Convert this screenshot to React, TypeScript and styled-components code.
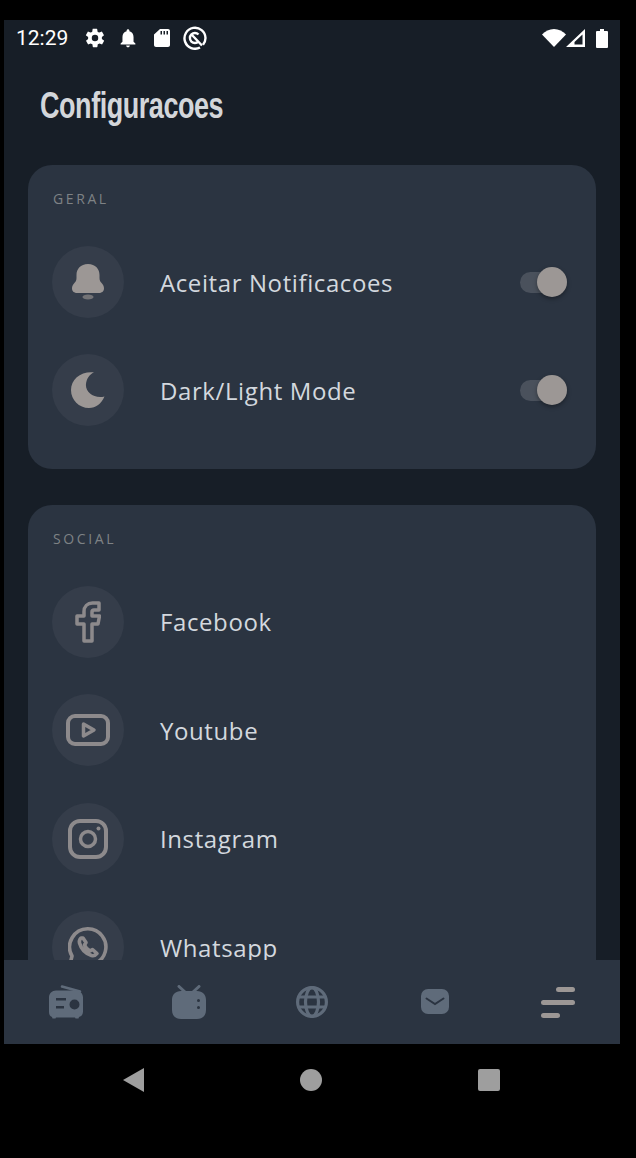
import React from "react"
import styled, { createGlobalStyle } from "styled-components"

const GlobalStyle = createGlobalStyle`
    html, body {
        margin: 0;
        padding: 0;
        background: #000;
    }
`

const ICON = "#9c9795"
const OUTLINE = "#8d8a8c"
const NAV_ICON = "#5f6b7a"

const BellIcon = () => (
    <svg width="32" height="36" viewBox="0 0 32 36">
        <path fill={ICON} d="M16 0C8.500 0 4.500 5 4.500 11v3c0 2.500-1 4-2.500 5.500C.5 21 0 23 0 24.500 0 27.500 2.500 29 5 29h22c2.500 0 5-1.500 5-4.500 0-1.500-.5-3.500-2-5-1.500-1.500-2.500-3-2.500-5.500v-3C27.500 5 23.500 0 16 0z" />
        <ellipse cx="16" cy="33" rx="5.500" ry="2.500" fill={ICON} opacity="0.6" />
    </svg>
)

const MoonIcon = () => (
    <svg width="34" height="36" viewBox="0 0 34 36">
        <path fill={ICON} d="M23 .3C10-1 0 7 0 18c0 10 8 18 18 18 7 0 12-4 15.500-11.500C23 27 14 20 15 12c.5-5 3-9 8-11.700z" />
    </svg>
)

const FacebookIcon = () => (
    <svg width="26" height="42" viewBox="0 0 26 42" fill="none" stroke={OUTLINE} strokeWidth="3.500" strokeLinejoin="round">
        <path d="M24 2h-6.500C12.500 2 9 5.500 9 10.500V15H2v8h7v17h8V23h6l1.500-8H17v-4c0-1.200.8-2 2-2h5V2z" />
    </svg>
)

const YoutubeIcon = () => (
    <svg width="44" height="32" viewBox="0 0 44 32" fill="none" stroke={OUTLINE} strokeWidth="4" strokeLinejoin="round">
        <rect x="2" y="2" width="40" height="28" rx="7" />
        <path d="M17.500 10 28 16l-10.500 6z" strokeWidth="3.500" />
    </svg>
)

const InstagramIcon = () => (
    <svg width="40" height="40" viewBox="0 0 40 40" fill="none" stroke={OUTLINE} strokeWidth="4">
        <rect x="2" y="2" width="36" height="36" rx="10" />
        <circle cx="20" cy="20" r="7.500" strokeWidth="3.500" />
        <circle cx="30.500" cy="9.500" r="2" fill={OUTLINE} stroke="none" />
    </svg>
)

const WhatsappIcon = () => (
    <svg width="40" height="40" viewBox="0 0 40 40" fill="none" stroke={OUTLINE} strokeWidth="3.600" strokeLinejoin="round">
        <path d="M20 1.800A18.200 18.200 0 0 0 4 29L1.800 38.200 11 36A18.200 18.200 0 1 0 20 1.800z" />
        <path d="M13 11c-1.500 1.500-2 3-1.500 5 1.500 5.500 6 10.500 12 12.500 2 .5 4 0 5.500-2l-4.500-4-2.500 1.500c-2.500-1-4.500-3.500-5.500-6l1.500-2.500-3-4.500z" />
    </svg>
)

const RadioIcon = () => (
    <svg width="34" height="34" viewBox="0 0 34 34">
        <path d="M13 1.500 31 6.500" stroke={NAV_ICON} strokeWidth="2.500" strokeLinecap="round" />
        <path fill={NAV_ICON} fillRule="evenodd" d="M7 5.500h20c4 0 7 3 7 7v14c0 3-1.500 5-4 5.500l-.5 1.500h-3l-.5-1H7l-.5 1h-3L3 32c-2-.5-3-2.500-3-5V12.500c0-4 3-7 7-7zM7 13v2.500h10V13H7zm0 8v2.500h8V21H7zm18.500-6.500a5 5 0 1 0 0 10 5 5 0 0 0 0-10z" />
    </svg>
)

const TvIcon = () => (
    <svg width="34" height="34" viewBox="0 0 34 34">
        <path d="M7 1.500 13 7M27 1.500 21 7" stroke={NAV_ICON} strokeWidth="3" strokeLinecap="round" />
        <path fill={NAV_ICON} fillRule="evenodd" d="M9 6h16c5.500 0 9 3.500 9 9v10c0 5.500-3.500 9-9 9H9c-5.500 0-9-3.500-9-9V15c0-5.500 3.500-9 9-9zm17.500 8a1.500 1.500 0 1 0 0 3 1.500 1.500 0 0 0 0-3zm0 7a1.500 1.500 0 1 0 0 3 1.500 1.500 0 0 0 0-3z" />
    </svg>
)

const GlobeIcon = () => (
    <svg width="32" height="32" viewBox="0 0 32 32" fill="none" stroke={NAV_ICON} strokeWidth="3.200">
        <circle cx="16" cy="16" r="14.400" />
        <ellipse cx="16" cy="16" rx="6.500" ry="14.400" />
        <path d="M2 11h28M2 21h28" />
    </svg>
)

const MailIcon = () => (
    <svg width="28" height="26" viewBox="0 0 28 26">
        <rect width="28" height="25" rx="7" fill={NAV_ICON} />
        <path d="M5.500 9.500 14 15 22.500 9.500" fill="none" stroke="#2b3441" strokeWidth="2" strokeLinecap="round" />
    </svg>
)

const MenuIcon = () => (
    <svg width="34" height="31" viewBox="0 0 34 31" fill={ICON}>
        <rect x="15" y="0" width="19" height="5" rx="2.500" />
        <rect x="0" y="13" width="34" height="5" rx="2.500" />
        <rect x="0" y="26" width="19" height="5" rx="2.500" />
    </svg>
)

const geral = [
    { label: "Aceitar Notificacoes", icon: <BellIcon /> },
    { label: "Dark/Light Mode", icon: <MoonIcon /> },
]

const social = [
    { label: "Facebook", icon: <FacebookIcon /> },
    { label: "Youtube", icon: <YoutubeIcon /> },
    { label: "Instagram", icon: <InstagramIcon /> },
    { label: "Whatsapp", icon: <WhatsappIcon /> },
]

const App = () => {
    return (
        <Device>
            <GlobalStyle />
            <Screen>
                <StatusBar>
                    <StatusLeft>
                        <Clock>12:29</Clock>
                        <svg width="24" height="24" viewBox="-1 -1 26 26" fill="#fff">
                            <path d="M19.400 13c0-.3.100-.6.100-1s0-.7-.1-1l2.100-1.600c.2-.2.200-.4.100-.6l-2-3.500c-.1-.2-.4-.3-.6-.2l-2.500 1c-.5-.4-1.100-.7-1.700-1l-.4-2.600c0-.3-.2-.5-.5-.5h-4c-.3 0-.5.200-.5.400l-.4 2.700c-.6.200-1.100.6-1.700 1l-2.500-1c-.2-.1-.5 0-.6.200l-2 3.500c-.1.200-.1.400.1.600L4.600 11c0 .3-.1.600-.1 1s0 .7.1 1l-2.100 1.600c-.2.200-.2.400-.1.600l2 3.500c.1.200.4.300.6.200l2.500-1c.5.400 1.100.7 1.700 1l.4 2.600c0 .3.200.5.500.5h4c.3 0 .5-.2.500-.4l.4-2.700c.6-.2 1.100-.6 1.700-1l2.500 1c.2.100.5 0 .6-.2l2-3.500c.1-.2.100-.4-.1-.6L19.400 13zM12 15.500a3.500 3.500 0 1 1 0-7 3.500 3.500 0 0 1 0 7z" />
                        </svg>
                        <svg width="24" height="24" viewBox="-1 -1 26 26" fill="#fff">
                            <path d="M12 22c1.100 0 2-.9 2-2h-4c0 1.100.9 2 2 2zm6-6v-5c0-3.100-1.600-5.600-4.500-6.300V4c0-.8-.7-1.500-1.500-1.500s-1.500.7-1.500 1.500v.7C7.600 5.400 6 7.900 6 11v5l-2 2v1h16v-1l-2-2z" />
                        </svg>
                        <svg width="24" height="24" viewBox="0 0 24 24" fill="#fff">
                            <path d="M18 3h-8L4 8.500V19c0 1.100.9 2 2 2h12c1.100 0 2-.9 2-2V5c0-1.100-.9-2-2-2zm-6 5.500h-1.500V5H12v3.500zm3 0h-1.500V5H15v3.500zm3 0h-1.500V5H18v3.500z" />
                        </svg>
                        <svg width="24" height="24" viewBox="0 0 24 24" fill="none" stroke="#fff" strokeWidth="2.400">
                            <path d="M17 21.500A10.500 10.500 0 1 1 22.500 12c0 2.500-1 5-2.500 6.800" />
                            <path d="M15.500 8.500a5 5 0 1 0 0 7M8.500 8.500 19 19.500" />
                        </svg>
                    </StatusLeft>
                    <StatusRight>
                        <svg width="24" height="18" viewBox="0 0 24 18" fill="#fff">
                            <path d="M12 18 0 5.500C3.300 2.200 7.400 0 12 0s8.700 2.200 12 5.500L12 18z" />
                        </svg>
                        <svg width="20" height="18" viewBox="0 0 20 18">
                            <path fill="#fff" fillRule="evenodd" d="M19 0v18H0L19 0zm-2.500 5.500L8.500 13v2.500h8v-10z" />
                        </svg>
                        <svg width="12" height="19" viewBox="0 0 12 19" fill="#fff">
                            <path d="M4 0h4v2h3a1 1 0 0 1 1 1v15a1 1 0 0 1-1 1H1a1 1 0 0 1-1-1V3a1 1 0 0 1 1-1h3V0z" />
                        </svg>
                    </StatusRight>
                </StatusBar>
                <Scroller>
                    <Title>Configuracoes</Title>
                    <Card>
                        <CardLabel>GERAL</CardLabel>
                        {geral.map(item => (
                            <Row key={item.label}>
                                <IconCircle>{item.icon}</IconCircle>
                                <RowLabel>{item.label}</RowLabel>
                                <Toggle>
                                    <ToggleThumb />
                                </Toggle>
                            </Row>
                        ))}
                    </Card>
                    <Card>
                        <CardLabel>SOCIAL</CardLabel>
                        {social.map(item => (
                            <Row key={item.label}>
                                <IconCircle>{item.icon}</IconCircle>
                                <RowLabel>{item.label}</RowLabel>
                            </Row>
                        ))}
                    </Card>
                </Scroller>
                <BottomNav>
                    <NavSlot><RadioIcon /></NavSlot>
                    <NavSlot><TvIcon /></NavSlot>
                    <NavSlot><GlobeIcon /></NavSlot>
                    <NavSlot><MailIcon /></NavSlot>
                    <NavSlot><MenuIcon /></NavSlot>
                </BottomNav>
            </Screen>
            <SystemBar>
                <BackButton />
                <HomeButton />
                <RecentButton />
            </SystemBar>
        </Device>
    )
}

export default App

const Device = styled.div`
    width: 636px;
    height: 1158px;
    padding-top: 20px;
    box-sizing: border-box;
    background: #000;
    overflow: hidden;
`

const Screen = styled.div`
    width: 616px;
    height: 1024px;
    margin-left: 4px;
    display: flex;
    flex-direction: column;
    background: #171e27;
`

const StatusBar = styled.div`
    height: 36px;
    flex-shrink: 0;
    padding: 0 12px;
    display: flex;
    justify-content: space-between;
    align-items: center;
`

const StatusLeft = styled.div`
    display: flex;
    align-items: center;
    gap: 9.5px;
`

const StatusRight = styled.div`
    display: flex;
    align-items: center;

    svg:last-child {
        margin-left: 10px;
    }
`

const Clock = styled.span`
    font-family: Roboto, sans-serif;
    font-size: 21px;
    color: #fff;
    margin-right: 5px;
`

const Scroller = styled.div`
    flex: 1;
    min-height: 0;
    overflow: hidden;
    padding: 0 24px;
`

const Title = styled.h1`
    margin: 26px 0 35px 12px;
    height: 48px;
    font-family: "Liberation Sans", sans-serif;
    font-size: 36px;
    line-height: 48px;
    font-weight: 700;
    letter-spacing: -0.6px;
    color: #d3d6da;
    transform: scaleX(0.75);
    transform-origin: left center;
    white-space: nowrap;
`

const Card = styled.section`
    background: #2b3441;
    border-radius: 24px;
    padding: 24px 24px 42.6px;
    margin-bottom: 36px;
`

const CardLabel = styled.div`
    font-family: "Open Sans", sans-serif;
    font-size: 14px;
    line-height: 20px;
    letter-spacing: 2.6px;
    color: #7e8285;
    margin: 0 0 37px 1px;
`

const Row = styled.div`
    display: flex;
    align-items: center;
    height: 72px;
    margin-top: 36.4px;

    &:first-of-type {
        margin-top: 0;
    }
`

const IconCircle = styled.div`
    width: 72px;
    height: 72px;
    flex-shrink: 0;
    border-radius: 50%;
    background: #353d4a;
    display: flex;
    align-items: center;
    justify-content: center;
`

const RowLabel = styled.span`
    flex: 1;
    margin-left: 36px;
    font-family: "Open Sans", sans-serif;
    font-size: 24px;
    letter-spacing: 0.6px;
    color: #d3d8de;
`

const Toggle = styled.div`
    position: relative;
    width: 47px;
    height: 21px;
    margin-right: 5px;
    border-radius: 11px;
    background: #4a515c;
`

const ToggleThumb = styled.div`
    position: absolute;
    right: 0;
    top: -5px;
    width: 30px;
    height: 30px;
    border-radius: 50%;
    background: ${ICON};
    box-shadow: 0 2px 4px rgba(0, 0, 0, 0.35);
`

const BottomNav = styled.nav`
    height: 84px;
    flex-shrink: 0;
    background: #2b3441;
    display: flex;
    align-items: center;
    justify-content: space-around;
`

const NavSlot = styled.div`
    flex: 1;
    display: flex;
    align-items: center;
    justify-content: center;
`

const SystemBar = styled.div`
    height: 114px;
    width: 616px;
    margin-left: 4px;
    padding: 0 1px 42px 0;
    box-sizing: border-box;
    display: flex;
    align-items: center;
    justify-content: center;
    gap: 156px;
`

const BackButton = styled.div`
    width: 0;
    height: 0;
    margin-left: -1px;
    border-top: 12px solid transparent;
    border-bottom: 12px solid transparent;
    border-right: 21px solid #9e9e9e;
`

const HomeButton = styled.div`
    width: 22px;
    height: 22px;
    border-radius: 50%;
    background: #9e9e9e;
`

const RecentButton = styled.div`
    width: 22px;
    height: 22px;
    border-radius: 2px;
    background: #9e9e9e;
`
